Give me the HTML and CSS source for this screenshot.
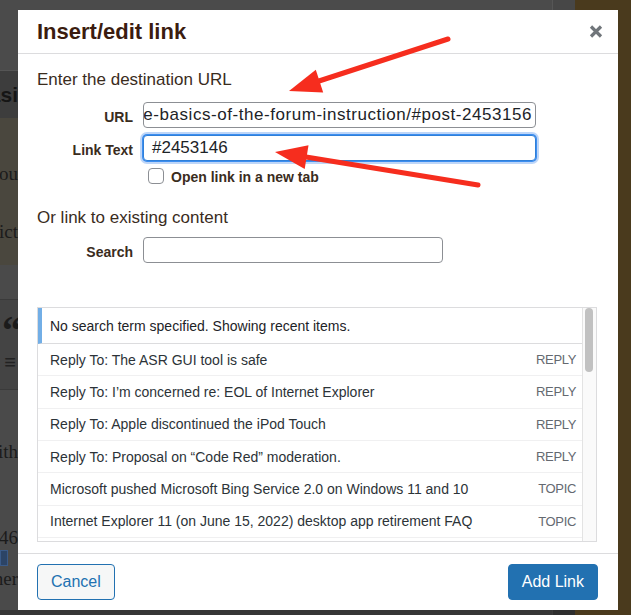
FILE: index.html
```html
<!DOCTYPE html>
<html lang="en">
<head>
<meta charset="utf-8">
<title>Insert/edit link</title>
<link rel="stylesheet" href="styles.css">
</head>
<body>
<div class="screen">
  <div class="top-strip">
    <div class="page-gray"></div>
    <div class="page-edge"></div>
    <div class="page-brown"></div>
  </div>

  <div class="left-strip">
    <div class="band band-a"></div>
    <div class="band band-b"><span class="frag sans">Basi</span></div>
    <div class="band band-c">
      <span class="frag serif f1">you</span>
      <span class="frag serif f2">strict</span>
    </div>
    <div class="band band-d"></div>
    <div class="band band-e">
      <span class="frag quote">“</span>
      <span class="frag icon">≡</span>
    </div>
    <div class="band band-f">
      <span class="frag serif f3">with</span>
      <span class="frag serif f4">2453146</span>
      <span class="chip"></span>
      <span class="frag serif f5">other</span>
    </div>
  </div>

  <div class="modal">
    <div class="modal-header">
      <h1 class="modal-title">Insert/edit link</h1>
      <button class="close-btn" type="button" aria-label="Close">
        <svg width="14" height="13" viewBox="0 0 14 13"><path d="M2 1.5 L12 11.5 M12 1.5 L2 11.5" stroke="#70757a" stroke-width="3.2" stroke-linecap="butt"/></svg>
      </button>
    </div>

    <div class="modal-body">
      <p class="lead">Enter the destination URL</p>
      <div class="form-row row-url">
        <span class="label">URL</span>
        <div class="field field-url"><span class="field-text url-text">he-basics-of-the-forum-instruction/#post-2453156</span></div>
      </div>
      <div class="form-row row-text">
        <span class="label">Link Text</span>
        <div class="field field-focus"><span class="field-text">#2453146</span></div>
      </div>
      <div class="check-row">
        <span class="checkbox"></span>
        <span class="check-label">Open link in a new tab</span>
      </div>

      <p class="lead lead-second">Or link to existing content</p>
      <div class="form-row row-search">
        <span class="label">Search</span>
        <div class="field field-search"></div>
      </div>

      <div class="results">
        <ul class="result-list">
          <li class="notice">No search term specified. Showing recent items.</li>
          <li class="item"><span class="item-title">Reply To: The ASR GUI tool is safe</span><span class="item-info">Reply</span></li>
          <li class="item"><span class="item-title">Reply To: I’m concerned re: EOL of Internet Explorer</span><span class="item-info">Reply</span></li>
          <li class="item"><span class="item-title">Reply To: Apple discontinued the iPod Touch</span><span class="item-info">Reply</span></li>
          <li class="item"><span class="item-title">Reply To: Proposal on “Code Red” moderation.</span><span class="item-info">Reply</span></li>
          <li class="item"><span class="item-title">Microsoft pushed Microsoft Bing Service 2.0 on Windows 11 and 10</span><span class="item-info">Topic</span></li>
          <li class="item"><span class="item-title">Internet Explorer 11 (on June 15, 2022) desktop app retirement FAQ</span><span class="item-info">Topic</span></li>
          <li class="item"><span class="item-title">Reply To: Windows 11 update</span><span class="item-info">Reply</span></li>
        </ul>
        <div class="scrollbar"><div class="thumb"></div></div>
      </div>
    </div>

    <div class="modal-footer">
      <button class="btn btn-secondary" type="button">Cancel</button>
      <button class="btn btn-primary" type="button">Add Link</button>
    </div>
  </div>

  <div class="right-strip"></div>

  <div class="bottom-strip">
    <div class="page-gray dark"></div>
    <div class="page-edge dark"></div>
    <div class="page-brown"></div>
  </div>
</div>

<svg class="annotations" width="631" height="615" viewBox="0 0 631 615" aria-hidden="true">
  <line x1="448" y1="39" x2="319" y2="81" stroke="#f62d1e" stroke-width="5" stroke-linecap="round"/>
  <polygon points="289,91 315.8,69.8 323.2,92.6" fill="#f62d1e"/>
  <line x1="478" y1="185" x2="306" y2="157" stroke="#f62d1e" stroke-width="5" stroke-linecap="round"/>
  <polygon points="275,152 308.5,145.3 304.7,168.9" fill="#f62d1e"/>
</svg>
</body>
</html>
```

FILE: styles.css
```css
* { box-sizing: border-box; }

html, body {
  margin: 0;
  padding: 0;
}

body {
  width: 631px;
  height: 615px;
  overflow: hidden;
  position: relative;
  background: #4a4a4a;
  font-family: "Liberation Sans", Arial, sans-serif;
}

.screen {
  display: grid;
  grid-template-columns: 18px 600px 13px;
  grid-template-rows: 10px 600px 5px;
  width: 631px;
  height: 615px;
}

/* ---------- backdrop ---------- */
.top-strip,
.bottom-strip {
  grid-column: 1 / -1;
  display: flex;
}
.page-gray { flex: 1; background: #4b4b4b; }
.page-gray.dark { background: #363636; }
.page-edge { width: 23px; background: #474747; border-left: 1px solid #565656; }
.page-edge.dark { background: #2e2e2e; border-left-color: #3a3a3a; }
.page-brown { width: 56px; background: #4a3a1d; }

.right-strip { background: #4a3a1d; }

.left-strip {
  display: flex;
  flex-direction: column;
  overflow: hidden;
}
.band {
  position: relative;
  display: flex;
  flex-direction: column;
  align-items: flex-end;
  overflow: hidden;
}
.band-a { height: 60px; background: #4b4b4b; }
.band-b { height: 48px; background: #3d3d3d; border-top: 1px solid #555; justify-content: center; }
.band-c { height: 147px; background: #4a473e; padding-top: 46px; }
.band-d { height: 35px; background: #4a4a4a; border-bottom: 1px solid #3a3a3a; }
.band-e { height: 90px; background: #444; border-bottom: 1px solid #3a3a3a; padding-top: 14px; }
.band-f { flex: 1; background: #4a4a4a; padding-top: 52px; }

.frag {
  white-space: nowrap;
  color: #1b1b1b;
  line-height: 20px;
}
.sans { font-family: "Liberation Sans", Arial, sans-serif; font-weight: 700; font-size: 21px; color: #151515; }
.serif { font-family: "Liberation Serif", "Times New Roman", serif; font-size: 19px; }
.f2 { margin-top: 38px; }
.f4 { margin-top: 66px; }
.f5 { margin-top: 3px; }
.quote { font-family: "Liberation Serif", serif; font-weight: 700; font-size: 40px; line-height: 34px; margin-right: -4px; }
.icon { font-size: 20px; margin-top: 4px; margin-right: 2px; color: #222; }
.chip {
  width: 8px;
  height: 16px;
  margin-top: 2px;
  align-self: flex-start;
  background: #2c4466;
  border: 1px solid #3a5a88;
}

/* ---------- modal ---------- */
.modal {
  grid-row: 2;
  grid-column: 2;
  background: #fff;
  display: flex;
  flex-direction: column;
}

.modal-header {
  height: 44px;
  border-bottom: 1px solid #dcdcde;
  display: flex;
  align-items: center;
  justify-content: space-between;
  padding: 0 15px 0 19px;
}
.modal-title {
  margin: 0;
  font-size: 22px;
  line-height: 1;
  font-weight: 700;
  color: #3b1c10;
}
.close-btn {
  border: 0;
  background: none;
  padding: 0;
  width: 14px;
  height: 13px;
  display: flex;
}

.modal-body {
  flex: 1;
  display: flex;
  flex-direction: column;
  padding: 16px 21px 11px 19px;
}

.lead {
  margin: 0;
  font-size: 17px;
  line-height: 20px;
  color: #3a2c1d;
}
.lead-second { margin-top: 24px; }

.form-row {
  display: flex;
  align-items: center;
  gap: 10px;
  height: 26px;
}
.row-url { margin-top: 12px; }
.row-text { margin-top: 7px; }
.row-search { margin-top: 9px; }

.label {
  width: 96px;
  text-align: right;
  font-size: 14px;
  font-weight: 700;
  color: #3a2c1d;
  padding-top: 3px;
}

.field {
  height: 26px;
  border: 1px solid #8c8f94;
  border-radius: 4px;
  background: #fff;
  display: flex;
  align-items: center;
  overflow: hidden;
  font-size: 17px;
  color: #1d2327;
  white-space: nowrap;
}
.field-url {
  width: 393px;
  justify-content: flex-end;
  padding-right: 3px;
}
.url-text { letter-spacing: 0.55px; }
.field-focus {
  width: 393px;
  padding-left: 8px;
  border-color: #2f7fd8;
  box-shadow: 0 0 0 1px #3d8ef0, 0 0 0 3px rgba(110, 165, 240, 0.45);
}
.field-search { width: 300px; }
.field-text { flex: none; }

.check-row {
  margin-top: 7px;
  height: 16px;
  display: flex;
  align-items: center;
  gap: 7px;
  padding-left: 111px;
}
.checkbox {
  width: 16px;
  height: 16px;
  border: 1px solid #8c8f94;
  border-radius: 4px;
  background: #fff;
}
.check-label {
  font-size: 14px;
  font-weight: 700;
  color: #3a2c1d;
  padding-top: 2px;
}

/* ---------- results ---------- */
.results {
  margin-top: 44px;
  height: 235px;
  border: 1px solid #dcdcde;
  display: flex;
  overflow: hidden;
}
.result-list {
  flex: 1;
  margin: 0;
  padding: 0;
  list-style: none;
  overflow: hidden;
}
.notice {
  height: 36px;
  border-left: 4px solid #72aee6;
  border-bottom: 1px solid #dcdcde;
  padding-left: 8px;
  display: flex;
  align-items: center;
  font-size: 14px;
  color: #1d2327;
}
.item {
  height: 32.33px;
  border-bottom: 1px solid #f0f0f1;
  display: flex;
  align-items: center;
  justify-content: space-between;
  padding: 0 6px 0 12px;
  font-size: 14px;
  color: #2c3338;
  white-space: nowrap;
}
.item-info {
  text-transform: uppercase;
  font-size: 13px;
  letter-spacing: -0.35px;
  color: #646970;
}
.scrollbar {
  width: 14px;
  border-left: 1px solid #e3e3e3;
  background: #fafafa;
  padding: 0 3px 0 2px;
}
.thumb {
  height: 64px;
  width: 8px;
  border-radius: 4px;
  background: #c1c1c1;
}

/* ---------- footer ---------- */
.modal-footer {
  border-top: 1px solid #dcdcde;
  padding: 10px 20px 10px 19px;
  display: flex;
  justify-content: space-between;
}
.btn {
  height: 36px;
  border-radius: 4px;
  font-family: "Liberation Sans", Arial, sans-serif;
  font-size: 16px;
  padding: 0 13px;
  border: 1px solid #2271b1;
}
.btn-secondary {
  background: #f6f7f7;
  color: #2271b1;
}
.btn-primary {
  background: #2271b1;
  color: #fff;
}

/* ---------- annotation overlay ---------- */
.annotations {
  position: absolute;
  top: 0;
  left: 0;
  pointer-events: none;
}
```
